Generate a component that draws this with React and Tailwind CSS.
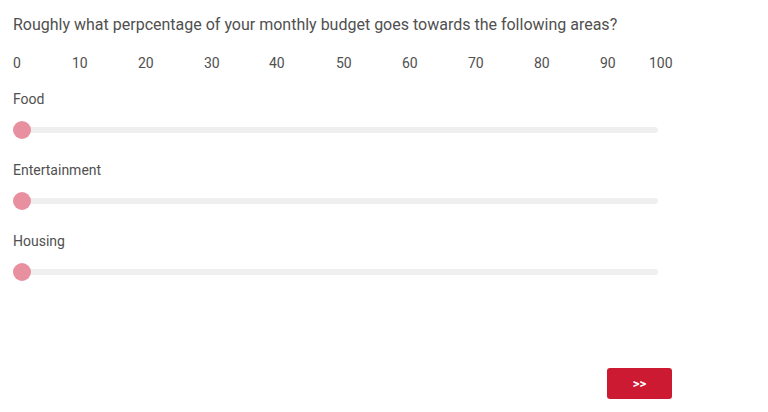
const ticks = [
  { v: '0', cls: 'w-[59px]' },
  { v: '10', cls: 'w-[66px]' },
  { v: '20', cls: 'w-[66px]' },
  { v: '30', cls: 'w-[65px]' },
  { v: '40', cls: 'w-[67px]' },
  { v: '50', cls: 'w-[66px]' },
  { v: '60', cls: 'w-[66px]' },
  { v: '70', cls: 'w-[66px]' },
  { v: '80', cls: 'w-[66px]' },
  { v: '90', cls: 'w-[49px]' },
  { v: '100', cls: '' },
];

const areas = ['Food', 'Entertainment', 'Housing'];

function Slider() {
  return (
    <div className="relative h-[18px] w-[645px] flex items-center">
      <div className="h-[6px] w-full rounded-full bg-[#efefef]" />
      <div className="absolute left-0 top-0 h-[18px] w-[18px] rounded-full bg-[#e8909f]" />
    </div>
  );
}

export default function App() {
  return (
    <div className="w-[768px] h-[412px] bg-white text-[#505050] font-['Roboto',sans-serif] pl-[13px] pt-[15px] relative">
      <p className="text-[16px] leading-[20px]">
        Roughly what perpcentage of your monthly budget goes towards the following areas?
      </p>

      <div className="flex mt-[19px] text-[14px] leading-[18px]">
        {ticks.map(t => (
          <span key={t.v} className={t.cls}>{t.v}</span>
        ))}
      </div>

      <div className="mt-[18px] flex flex-col">
        {areas.map(a => (
          <div key={a} className="h-[71px]">
            <p className="text-[14px] leading-[18px]">{a}</p>
            <div className="mt-[13px]">
              <Slider />
            </div>
          </div>
        ))}
      </div>

      <div className="flex justify-end w-[659px] mt-[65px]">
        <button className="w-[65px] h-[31px] rounded-[3px] bg-[#cc1a33] text-white text-[13px] font-bold">
          &gt;&gt;
        </button>
      </div>
    </div>
  );
}
